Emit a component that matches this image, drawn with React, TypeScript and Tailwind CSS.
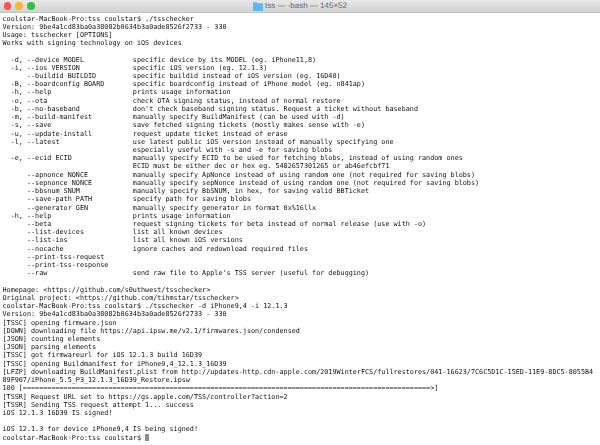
const prompt = "coolstar-MacBook-Pro:tss coolstar$ ";
const version = "Version: 9be4a1cd83ba0a38082b0634b3a0ade8526f2733 - 330";

function opt(left: string, right = "") {
  return left.padEnd(32, " ") + right;
}

const lines = [
  prompt + "./tsschecker",
  version,
  "Usage: tsschecker [OPTIONS]",
  "Works with signing technology on iOS devices",
  "",
  opt("  -d, --device MODEL", "specific device by its MODEL (eg. iPhone11,8)"),
  opt("  -i, --ios VERSION", "specific iOS version (eg. 12.1.3)"),
  opt("      --buildid BUILDID", "specific buildid instead of iOS version (eg. 16D40)"),
  opt("  -B, --boardconfig BOARD", "specific boardconfig instead of iPhone model (eg. n841ap)"),
  opt("  -h, --help", "prints usage information"),
  opt("  -o, --ota", "check OTA signing status, instead of normal restore"),
  opt("  -b, --no-baseband", "don't check baseband signing status. Request a ticket without baseband"),
  opt("  -m, --build-manifest", "manually specify BuildManifest (can be used with -d)"),
  opt("  -s, --save", "save fetched signing tickets (mostly makes sense with -e)"),
  opt("  -u, --update-install", "request update ticket instead of erase"),
  opt("  -l, --latest", "use latest public iOS version instead of manually specifying one"),
  opt("", "especially useful with -s and -e for saving blobs"),
  opt("  -e, --ecid ECID", "manually specify ECID to be used for fetching blobs, instead of using random ones"),
  opt("", "ECID must be either dec or hex eg. 5482657301265 or ab46efcbf71"),
  opt("      --apnonce NONCE", "manually specify ApNonce instead of using random one (not required for saving blobs)"),
  opt("      --sepnonce NONCE", "manually specify sepNonce instead of using random one (not required for saving blobs)"),
  opt("      --bbsnum SNUM", "manually specify BbSNUM, in hex, for saving valid BBTicket"),
  opt("      --save-path PATH", "specify path for saving blobs"),
  opt("      --generator GEN", "manually specify generator in format 0x%16llx"),
  opt("  -h, --help", "prints usage information"),
  opt("      --beta", "request signing tickets for beta instead of normal release (use with -o)"),
  opt("      --list-devices", "list all known devices"),
  opt("      --list-ios", "list all known iOS versions"),
  opt("      --nocache", "ignore caches and redownload required files"),
  "      --print-tss-request",
  "      --print-tss-response",
  opt("      --raw", "send raw file to Apple's TSS server (useful for debugging)"),
  "",
  "Homepage: <https://github.com/s0uthwest/tsschecker>",
  "Original project: <https://github.com/tihmstar/tsschecker>",
  prompt + "./tsschecker -d iPhone9,4 -i 12.1.3",
  version,
  "[TSSC] opening firmware.json",
  "[DOWN] downloading file https://api.ipsw.me/v2.1/firmwares.json/condensed",
  "[JSON] counting elements",
  "[JSON] parsing elements",
  "[TSSC] got firmwareurl for iOS 12.1.3 build 16D39",
  "[TSSC] opening Buildmanifest for iPhone9,4_12.1.3_16D39",
  "[LFZP] downloading BuildManifest.plist from http://updates-http.cdn-apple.com/2019WinterFCS/fullrestores/041-16623/7C6C5D1C-15ED-11E9-8DC5-8055B4",
  "89F907/iPhone_5.5_P3_12.1.3_16D39_Restore.ipsw",
  "100 [" + "=".repeat(100) + ">]",
  "[TSSR] Request URL set to https://gs.apple.com/TSS/controller?action=2",
  "[TSSR] Sending TSS request attempt 1... success",
  "iOS 12.1.3 16D39 IS signed!",
  "",
  "iOS 12.1.3 for device iPhone9,4 IS being signed!",
];

export default function App() {
  return (
    <div className="flex h-[445px] w-[600px] flex-col overflow-hidden bg-white">
      {/* title bar */}
      <div className="relative flex h-[13px] shrink-0 items-center justify-center gap-[2px] border-b border-[#c4c4c4] bg-gradient-to-b from-[#e8e8e8] to-[#d2d2d2]">
        <div className="absolute left-[3.7px] top-[2px] flex gap-[4.3px]">
          <span className="size-[7.5px] rounded-full bg-[#f9544f]" />
          <span className="size-[7.5px] rounded-full bg-[#fbb52f]" />
          <span className="size-[7.5px] rounded-full bg-[#2fc240]" />
        </div>
        <svg width="10" height="9" viewBox="0 0 10 9">
          <path d="M0 1.2C0 .6.4.2 1 .2h2.6l1 1H9c.6 0 1 .4 1 1V8c0 .6-.4 1-1 1H1c-.6 0-1-.4-1-1z" fill="#5fb8ee" />
        </svg>
        <span className="font-['Liberation_Sans',sans-serif] text-[8px] leading-none text-[#666666] [text-rendering:geometricPrecision]">tss — -bash — 145×52</span>
      </div>
      {/* terminal output */}
      <div className="whitespace-pre pl-[2.5px] pt-[1.5px] font-['DejaVu_Sans_Mono','Liberation_Mono',monospace] text-[6.78px] leading-[8.23px] text-[#111111] [text-rendering:geometricPrecision] blur-[0.3px]">
        {lines.map((line, i) => (
          <div key={i} className="h-[8.23px]">{line}</div>
        ))}
        <div className="flex h-[8.23px] items-center">
          <span>{prompt}</span>
          <span className="h-[7px] w-[4px] bg-[#8c8c8c]" />
        </div>
      </div>
    </div>
  );
}
